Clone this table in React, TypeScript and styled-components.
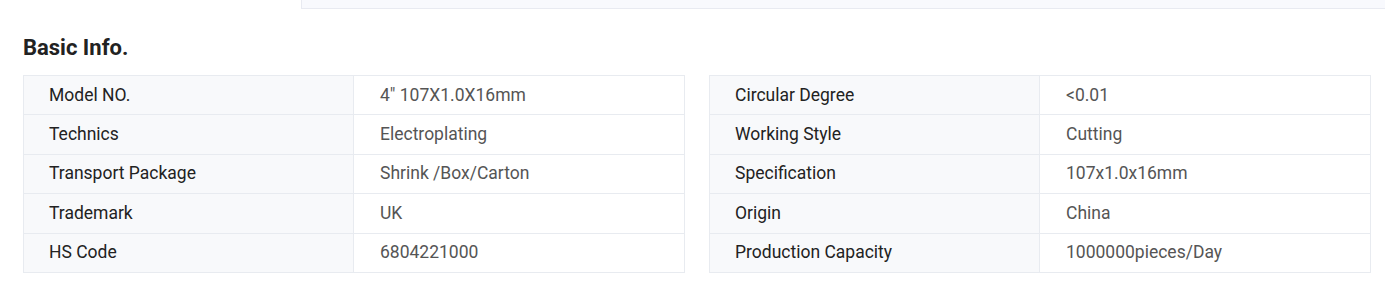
import React from "react";
import styled, { createGlobalStyle } from "styled-components";

const Global = createGlobalStyle`
  html, body { margin: 0; padding: 0; background: #fff; }
  body { font-family: Roboto, "Liberation Sans", Arial, sans-serif; overflow: hidden; }
  * { box-sizing: border-box; }
`;

const Page = styled.div`
  width: 1385px;
  display: flex;
  flex-direction: column;
`;

const TopPanel = styled.div`
  margin-left: 301px;
  margin-right: -20px;
  height: 9px;
  background: #f8f9fd;
  border-left: 1px solid #e8eaf1;
  border-bottom: 1px solid #e8eaf1;
`;

const Heading = styled.h2`
  margin: 25px 0 0 23px;
  font-size: 22px;
  line-height: 28px;
  font-weight: 700;
  color: #222;
`;

const Tables = styled.div`
  display: grid;
  grid-template-columns: 662px 662px;
  column-gap: 24px;
  padding: 13px 0 0 23px;
`;

const Table = styled.div`
  border: 1px solid #e8ebf0;
  border-bottom: none;
  display: flex;
  flex-direction: column;
`;

const Row = styled.div`
  display: grid;
  grid-template-columns: 330px 1fr;
  height: 39.4px;
  border-bottom: 1px solid #e8ebf0;
`;

const Cell = styled.div<{ $label?: boolean }>`
  display: flex;
  align-items: center;
  padding-left: ${(p) => (p.$label ? "25px" : "26px")};
  padding-bottom: 1px;
  font-size: 17.5px;
  color: ${(p) => (p.$label ? "#222" : "#555")};
  background: ${(p) => (p.$label ? "#f8f9fb" : "#fff")};
  border-right: ${(p) => (p.$label ? "1px solid #e8ebf0" : "none")};
  white-space: nowrap;
`;

const left: [string, string][] = [
  ["Model NO.", "4\" 107X1.0X16mm"],
  ["Technics", "Electroplating"],
  ["Transport Package", "Shrink /Box/Carton"],
  ["Trademark", "UK"],
  ["HS Code", "6804221000"],
];

const right: [string, string][] = [
  ["Circular Degree", "<0.01"],
  ["Working Style", "Cutting"],
  ["Specification", "107x1.0x16mm"],
  ["Origin", "China"],
  ["Production Capacity", "1000000pieces/Day"],
];

const InfoTable = ({ rows }: { rows: [string, string][] }) => (
  <Table>
    {rows.map(([k, v]) => (
      <Row key={k}>
        <Cell $label>{k}</Cell>
        <Cell>{v}</Cell>
      </Row>
    ))}
  </Table>
);

export default function App() {
  return (
    <Page>
      <Global />
      <TopPanel />
      <Heading>Basic Info.</Heading>
      <Tables>
        <InfoTable rows={left} />
        <InfoTable rows={right} />
      </Tables>
    </Page>
  );
}
